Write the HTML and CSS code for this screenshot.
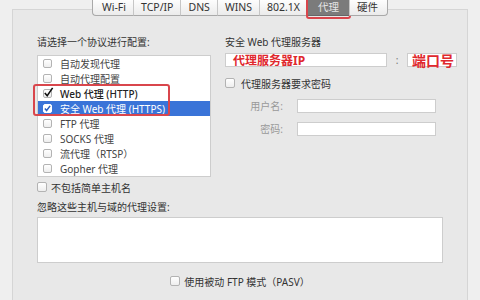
FILE: index.html
```html
<!DOCTYPE html>
<html lang="zh-CN">
<head>
  <meta charset="UTF-8">
  <meta name="viewport" content="width=device-width, initial-scale=1.0">
  <title>代理</title>
  <link rel="stylesheet" href="styles.css">
</head>
<body>
  <nav class="tabs">
    <span class="tab first">Wi-Fi</span>
    <span class="tab">TCP/IP</span>
    <span class="tab">DNS</span>
    <span class="tab">WINS</span>
    <span class="tab">802.1X</span>
    <span class="tab active">代理<i class="mark"></i></span>
    <span class="tab last">硬件</span>
  </nav>

  <div class="panel">
    <div class="columns">
      <div class="left">
        <p class="label">请选择一个协议进行配置:</p>
        <ul class="protocols">
          <li><span class="box"></span>自动发现代理</li>
          <li><span class="box"></span>自动代理配置</li>
          <li class="checked"><span class="box"><svg viewBox="0 0 12 12"><path d="M2 6.5 L4.6 9.6 L10.5 1"/></svg></span>Web 代理 (HTTP)</li>
          <li class="checked selected"><span class="box"><svg viewBox="0 0 12 12"><path d="M2.5 6 L4.8 8.6 L9.5 2.5"/></svg></span>安全 Web 代理 (HTTPS)</li>
          <li><span class="box"></span>FTP 代理</li>
          <li><span class="box"></span>SOCKS 代理</li>
          <li><span class="box"></span>流代理（RTSP）</li>
          <li><span class="box"></span>Gopher 代理</li>
          <i class="annot"></i>
        </ul>
        <div class="check exclude"><span class="box"></span>不包括简单主机名</div>
      </div>

      <div class="right">
        <p class="label">安全 Web 代理服务器</p>
        <div class="server">
          <div class="field host"><span class="hint">代理服务器IP</span></div>
          <span class="colon">:</span>
          <div class="field port"><span class="hint">端口号</span></div>
        </div>
        <div class="check auth"><span class="box"></span>代理服务器要求密码</div>
        <div class="creds">
          <span class="cred-label">用户名:</span>
          <div class="field"></div>
          <span class="cred-label">密码:</span>
          <div class="field"></div>
        </div>
      </div>
    </div>

    <p class="label bypass-label">忽略这些主机与域的代理设置:</p>
    <div class="bypass"></div>
    <div class="check pasv"><span class="box"></span>使用被动 FTP 模式（PASV）</div>
  </div>
</body>
</html>
```

FILE: styles.css
```css
body { margin: 0; width: 480px; height: 300px; overflow: hidden; background: #efefef; font-family: "Noto Sans", "Noto Sans CJK SC", sans-serif; font-size: 10px; color: #333; }

.tabs { display: flex; justify-content: center; height: 16px; position: relative; z-index: 1; }
.tab { position: relative; padding: 0 7px; line-height: 15px; font-size: 10.5px; color: #333; background: linear-gradient(#fdfdfd, #ebebeb); border-bottom: 1px solid #a9a9a9; border-left: 1px solid #c6c6c6; }
.tab.first { border-left: 1px solid #a9a9a9; border-bottom-left-radius: 4px; padding-left: 9px; }
.tab.last { border-right: 1px solid #a9a9a9; border-bottom-right-radius: 4px; padding-right: 9px; }
.tab.active { background: #7b7b7b; color: #e6e6e6; border-bottom-color: #666; padding: 0 10px; }
.mark { position: absolute; left: -2px; right: -2px; top: -3px; bottom: -4px; border: 2px solid #d9464c; border-radius: 3px; }

.panel { box-sizing: border-box; height: 291px; margin: -7px 12px 0; padding: 25px 24px 0; background: #e8e8e8; border: 1px solid #d5d5d5; border-bottom: none; }

.columns { display: grid; grid-template-columns: 174px 218px; column-gap: 14px; }
.label { margin: 0; line-height: 14px; color: #333; }
.left .label { margin-bottom: 6px; }
.right .label { margin-bottom: 4px; }

.protocols { position: relative; list-style: none; margin: 0; padding: 0; height: 120px; background: #fff; border: 1px solid #cdcdcd; }
.protocols li { display: flex; align-items: center; gap: 8px; height: 15px; padding-left: 5px; color: #444; }
.protocols li.checked { color: #222; font-weight: 500; }
.protocols li.selected { background: #3a74d8; color: #fff; font-weight: normal; }
.annot { position: absolute; left: -5px; top: 28px; width: 137px; height: 32px; box-sizing: border-box; border: 2px solid #d9464c; border-radius: 3px; }

.box { position: relative; flex: none; box-sizing: border-box; width: 9px; height: 9px; border: 1px solid #b3b3b3; border-radius: 2px; background: linear-gradient(#fff, #eeeeee); }
.box svg { position: absolute; left: -1px; top: -3px; width: 11px; height: 11px; fill: none; stroke: #111; stroke-width: 1.7; }
.selected .box { background: #fff; border-color: #fff; }
.selected .box svg { left: -1px; top: -1px; width: 9px; height: 9px; stroke: #2b5fc0; stroke-width: 2; }

.check { display: flex; align-items: center; gap: 4px; height: 14px; }
.check .box { width: 10px; height: 10px; }
.exclude { margin-top: 3px; }
.auth { margin-top: 9px; gap: 6px; }

.server { display: flex; align-items: center; }
.field { flex: none; box-sizing: border-box; height: 14px; background: #fff; border: 1px solid #cdcdcd; }
.host { width: 162px; }
.port { width: 50px; }
.colon { flex: none; width: 20px; text-align: center; color: #777; }
.hint { display: block; padding-left: 7px; line-height: 13px; font-size: 12px; font-weight: bold; color: #e0282e; white-space: nowrap; }
.port .hint { padding-left: 4px; font-size: 14px; }

.creds { display: grid; grid-template-columns: 58px 139px; column-gap: 14px; row-gap: 9px; margin-top: 9px; }
.cred-label { line-height: 14px; text-align: right; color: #999; }

.bypass-label { margin-top: 6px; }
.bypass { height: 46px; margin-top: 3px; background: #fff; border: 1px solid #cdcdcd; box-sizing: border-box; }
.pasv { justify-content: center; margin-top: 11px; }
```
